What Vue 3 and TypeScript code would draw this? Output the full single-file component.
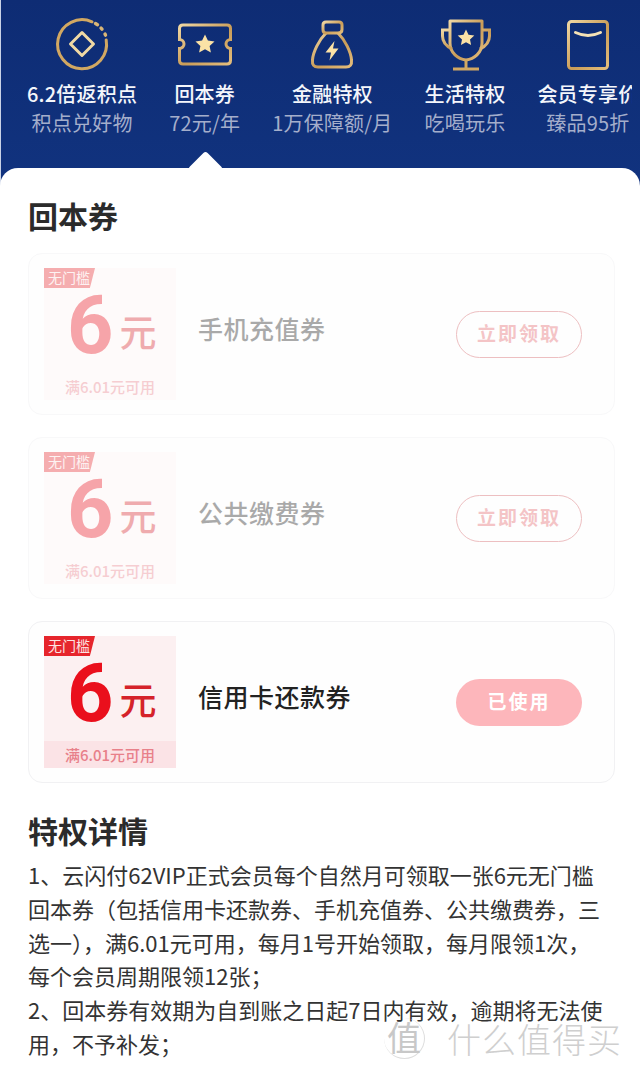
<template>
  <div class="page">
    <div class="header">
      <div class="tabs">
        <div v-for="tab in tabs" :key="tab.label" class="tab">
          <svg class="tab__icon" viewBox="0 0 64 64" fill="none">
            <defs>
              <linearGradient :id="'gold-' + tab.icon" x1="0" y1="0" x2="1" y2="1">
                <stop offset="0" stop-color="#f0d7a2" />
                <stop offset="0.55" stop-color="#c99c58" />
                <stop offset="1" stop-color="#e3bd7c" />
              </linearGradient>
            </defs>
            <g v-if="tab.icon === 'coin'" stroke-width="3" stroke-linecap="round">
              <path d="M42 9.8A24.5 24.5 0 1 0 56.2 28" stroke="#d2a862" />
              <path d="M45.5 11.5l2 1.2M51 16l1 1.2M55 22l.5 1.2" stroke="#d9b677" stroke-width="3.4" />
              <path d="M32 20.5L43.5 32L32 43.5L20.5 32Z" stroke="#f0d9a4" stroke-linejoin="round" />
            </g>
            <g v-else-if="tab.icon === 'ticket'">
              <path d="M10 13H54Q57.5 13 57.5 16.5V27.5A4.5 4.5 0 0 0 57.5 36.5V48.5Q57.5 52 54 52H10Q6.5 52 6.5 48.5V36.5A4.5 4.5 0 0 0 6.5 27.5V16.5Q6.5 13 10 13Z" stroke="url(#gold-ticket)" stroke-width="3" />
              <path d="M32 22.5l2.9 6.1 6.6.8-4.9 4.5 1.3 6.6-5.900-3.300-5.900 3.300 1.300-6.600-4.900-4.500 6.600-.8Z" fill="#fbe2a6" />
            </g>
            <g v-else-if="tab.icon === 'bag'">
              <path d="M26 21C19 28 13 40 12.5 48C12 53 14 55 18 55H46C50 55 52 53 51.500 48C51 40 45 28 38 21" stroke="url(#gold-bag)" stroke-width="3" stroke-linejoin="round" />
              <path d="M26 21Q23 21 23 17.500V13Q23 10 26 10H39Q42 10 42 13V17.500Q42 21 38 21Z" stroke="url(#gold-bag)" stroke-width="3" />
              <path d="M34.500 29L25.500 40.500H31L29.500 48.500L38.500 36.500H33Z" fill="#fbe2a6" />
            </g>
            <g v-else-if="tab.icon === 'cup'">
              <path d="M17 9H49V31C49 41 41 47 33 48C25 47 17 41 17 31Z" stroke="url(#gold-cup)" stroke-width="3" stroke-linejoin="round" />
              <path d="M17 18H9.500V24C9.500 30 13 34 19 37M49 18H56.500V24C56.500 30 53 34 47 37" stroke="url(#gold-cup)" stroke-width="3" />
              <path d="M33 48V56M20 57H46" stroke="#d2a862" stroke-width="3" />
              <path d="M33 17.500l2.500 5.300 5.800.7-4.300 3.900 1.100 5.700-5.100-2.800-5.100 2.800 1.100-5.700-4.300-3.900 5.800-.7Z" fill="#fbe2a6" />
            </g>
            <g v-else>
              <rect x="12.500" y="9.500" width="39" height="47" rx="3" stroke="url(#gold-box)" stroke-width="3" />
              <path d="M19.500 20.500Q32 26.500 44.500 20.500" stroke="#f5e2b6" stroke-width="3" stroke-linecap="round" />
            </g>
          </svg>
          <div class="tab__label">{{ tab.label }}</div>
          <div class="tab__sub">{{ tab.sub }}</div>
        </div>
      </div>
      <div class="header__arrow"></div>
    </div>

    <div class="panel">
      <h2 class="panel__title">回本券</h2>

      <div v-for="coupon in coupons" :key="coupon.name" class="coupon" :class="{ 'coupon--off': !coupon.used }">
        <div class="coupon__face">
          <span class="coupon__tag">无门槛</span>
          <div class="coupon__amount">
            <span class="coupon__num">6</span>
            <span class="coupon__unit">元</span>
          </div>
          <div class="coupon__cond">满6.01元可用</div>
        </div>
        <div class="coupon__name">{{ coupon.name }}</div>
        <button class="coupon__btn" :class="{ 'coupon__btn--used': coupon.used }">
          {{ coupon.used ? '已使用' : '立即领取' }}
        </button>
      </div>

      <h2 class="panel__title panel__title--detail">特权详情</h2>
      <p class="detail">1、云闪付62VIP正式会员每个自然月可领取一张6元无门槛回本券（包括信用卡还款券、手机充值券、公共缴费券，三选一），满6.01元可用，每月1号开始领取，每月限领1次，每个会员周期限领12张；</p>
      <p class="detail">2、回本券有效期为自到账之日起7日内有效，逾期将无法使用，不予补发；</p>
    </div>

    <div class="watermark">
      <span class="watermark__badge">值</span>
      <span class="watermark__text">什么值得买</span>
    </div>
  </div>
</template>

<script setup lang="ts">
type Tab = {
  icon: string
  label: string
  sub: string
}

type Coupon = {
  name: string
  used: boolean
}

const tabs: Tab[] = [
  { icon: 'coin', label: '6.2倍返积点', sub: '积点兑好物' },
  { icon: 'ticket', label: '回本券', sub: '72元/年' },
  { icon: 'bag', label: '金融特权', sub: '1万保障额/月' },
  { icon: 'cup', label: '生活特权', sub: '吃喝玩乐' },
  { icon: 'box', label: '会员专享价', sub: '臻品95折' }
]

const coupons: Coupon[] = [
  { name: '手机充值券', used: false },
  { name: '公共缴费券', used: false },
  { name: '信用卡还款券', used: true }
]
</script>

<style>
html,
body {
  margin: 0;
  background: #fff;
}
</style>

<style scoped>
.page {
  position: relative;
  width: 640px;
  height: 1079px;
  overflow: hidden;
  background: #fff;
  color: #2a2a2a;
  font-family: "Noto Sans CJK SC", "Noto Sans", sans-serif;
}

.header {
  position: relative;
  height: 192px;
  box-sizing: border-box;
  border-left: 1px solid #c9d2e6;
  background: linear-gradient(180deg, #0e2c74 0%, #11337f 100%);
}

.tabs {
  display: flex;
  gap: 32px;
  width: 631px;
  box-sizing: border-box;
  padding: 12px 0 0 26px;
  overflow: hidden;
}

.tab {
  flex: none;
  display: flex;
  flex-direction: column;
  align-items: center;
  white-space: nowrap;
}

.tab__icon {
  width: 64px;
  height: 64px;
  display: block;
}

.tab__label {
  height: 30px;
  margin-top: 3px;
  font-size: 20px;
  line-height: 30px;
  font-weight: 500;
  letter-spacing: 0.2px;
  color: #f4f6fb;
}

.tab__sub {
  height: 28px;
  font-size: 20px;
  line-height: 28px;
  letter-spacing: 0.2px;
  color: #a4aecb;
}

.header__arrow {
  position: absolute;
  left: 191.5px;
  top: 155.5px;
  width: 25px;
  height: 25px;
  background: #fff;
  border-radius: 3px;
  transform: rotate(45deg);
}

.panel {
  position: relative;
  margin-top: -24px;
  padding: 28px 25px 0 28px;
  border-radius: 18px 18px 0 0;
  background: #fff;
}

.panel__title {
  margin: 0 0 19px;
  font-size: 30px;
  line-height: 38px;
  font-weight: 700;
  color: #2b2b2b;
}

.panel__title--detail {
  margin: 28px 0 9px;
}

.coupon {
  display: flex;
  align-items: center;
  height: 162px;
  box-sizing: border-box;
  margin-bottom: 22px;
  padding: 0 32px 0 15px;
  border: 1px solid #f1f1f3;
  border-radius: 14px;
  background: #fefefe;
}

.coupon:last-of-type {
  margin-bottom: 0;
}

.coupon--off {
  border-color: #f8f8f9;
}

.coupon--off > * {
  opacity: 0.38;
}

.coupon--off .coupon__face {
  opacity: 1;
  background: #fefafa;
}

.coupon--off .coupon__face > * {
  opacity: 0.36;
}

.coupon--off .coupon__cond {
  background: none;
}

.coupon__face {
  position: relative;
  flex: none;
  display: flex;
  flex-direction: column;
  width: 132px;
  height: 132px;
  background: #fcf0f1;
}

.coupon__tag {
  position: absolute;
  left: 0;
  top: 0;
  width: 51px;
  height: 20px;
  padding-left: 4px;
  box-sizing: border-box;
  font-size: 14px;
  line-height: 18px;
  white-space: nowrap;
  color: #fde4e2;
  background: #e6252c;
  clip-path: polygon(0 0, 100% 0, 90% 100%, 0 100%);
}

.coupon__amount {
  flex: 1;
  display: flex;
  align-items: flex-end;
  padding: 0 0 18px 23px;
  color: #ea0f1c;
}

.coupon__num {
  font-family: Roboto, sans-serif;
  font-size: 81px;
  line-height: 58px;
  font-weight: 700;
}

.coupon__unit {
  margin-left: 6px;
  font-size: 37px;
  line-height: 48px;
  font-weight: 500;
  color: #d5222a;
}

.coupon__cond {
  height: 27px;
  font-size: 15px;
  line-height: 27px;
  font-weight: 500;
  text-align: center;
  color: #e8808a;
  background: #fbe3e6;
}

.coupon__name {
  flex: 1;
  margin: 0 0 13px 22px;
  font-size: 25px;
  font-weight: 500;
  letter-spacing: 0.5px;
  color: #222;
}

.coupon__btn {
  flex: none;
  width: 126px;
  height: 47px;
  padding: 0 0 3px;
  border: 1.5px solid #d25a5f;
  border-radius: 24px;
  background: #fff;
  font-family: inherit;
  font-size: 19px;
  font-weight: 700;
  letter-spacing: 2px;
  color: #e4686e;
}

.coupon__btn--used {
  border: none;
  background: #fdb6bb;
  color: #fff;
}

.detail {
  margin: 0;
  padding-right: 7px;
  font-size: 22px;
  line-height: 33.8px;
  color: #333;
}

.watermark {
  position: absolute;
  left: 384px;
  top: 1018px;
  display: flex;
  align-items: center;
  gap: 22px;
  color: #c8c8c8;
  pointer-events: none;
}

.watermark__badge {
  width: 40px;
  height: 40px;
  font-size: 34px;
  line-height: 38px;
  text-align: center;
  border-right: 1px solid #ddd;
  border-bottom: 1px solid #ddd;
  border-radius: 50%;
}

.watermark__text {
  font-size: 34px;
  line-height: 40px;
  font-weight: 300;
  letter-spacing: 1px;
  color: #cfcfcf;
}
</style>
